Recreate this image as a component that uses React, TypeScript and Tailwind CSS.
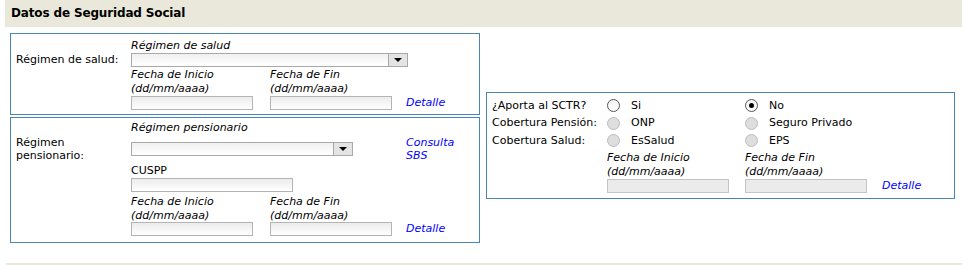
import React from "react";

const field = "h-[14px] border border-[#b4b4b4] bg-linear-to-b from-[#ececec] to-white";

const Select = ({width}: {width: string}) => (
    <div className={`${width} h-[14px] flex border border-[#a9a9a9] bg-linear-to-b from-[#f0f0f0] to-white`}>
        <div className="flex-1"/>
        <div className="w-[19px] h-full border-l border-[#a9a9a9] bg-[#e4e4e4] flex items-center justify-center">
            <div className="w-0 h-0 border-l-[4px] border-r-[4px] border-t-[4px] border-l-transparent border-r-transparent border-t-black"/>
        </div>
    </div>
);

const Radio = ({checked, disabled}: {checked?: boolean; disabled?: boolean}) => (
    <span
        className={
            "w-[13px] h-[13px] rounded-full border flex items-center justify-center " +
            (disabled ? "border-[#bcbcbc] bg-[#dedede]" : "border-[#555] bg-linear-to-b from-[#f4f4f4] to-white")
        }
    >
        {checked && <span className="w-[5px] h-[5px] rounded-full bg-black"/>}
    </span>
);

const Option = ({label, checked, disabled}: {label: string; checked?: boolean; disabled?: boolean}) => (
    <div className="flex items-center gap-[11px]">
        <Radio checked={checked} disabled={disabled}/>
        <span>{label}</span>
    </div>
);

export default function App() {
    return (
        <div className="w-[968px] h-[265px] overflow-hidden bg-white text-[11px] text-black font-['DejaVu_Sans',Verdana,sans-serif]">
            {/* encabezado */}
            <div className="ml-[5px] w-[957px] h-[27px] bg-[#eae8da] pl-[6px] text-[12px] font-bold tracking-[-0.15px] leading-[27px]">
                Datos de Seguridad Social
            </div>

            <div className="mt-[6px] pl-[10px] flex items-start">
                <div className="w-[470px] flex flex-col gap-[2px]">
                    {/* Régimen de salud */}
                    <div className="h-[82px] border border-[#4a85b8] pl-[5px] pt-[4px] grid grid-cols-[115px_139px_136px_1fr] grid-rows-[15px_13px_16px_14px_14px]">
                        <span className="col-start-2 col-span-3 italic leading-[15px]">Régimen de salud</span>
                        <span className="col-start-1 leading-[13px]">Régimen de salud:</span>
                        <div className="col-span-3">
                            <Select width="w-[277px]"/>
                        </div>
                        <span className="col-start-2 self-end italic leading-[15px]">Fecha de Inicio</span>
                        <span className="self-end italic leading-[15px]">Fecha de Fin</span>
                        <span/>
                        <span className="col-start-2 italic leading-[14px]">(dd/mm/aaaa)</span>
                        <span className="italic leading-[14px]">(dd/mm/aaaa)</span>
                        <span/>
                        <input readOnly className={`col-start-2 w-[122px] ${field}`}/>
                        <input readOnly className={`w-[122px] ${field}`}/>
                        <a className="italic text-[#0000ff] leading-[14px]">Detalle</a>
                    </div>

                    {/* Régimen pensionario */}
                    <div className="h-[126px] border border-[#4a85b8] pl-[5px] pt-[3px] grid grid-cols-[115px_139px_136px_1fr] grid-rows-[14px_27px_16px_14px_17px_13px_14px]">
                        <span className="col-start-2 col-span-3 italic leading-[14px]">Régimen pensionario</span>
                        <span className="col-start-1 self-center leading-[13px]">
                            Régimen<br/>pensionario:
                        </span>
                        <div className="col-span-2 self-center">
                            <Select width="w-[222px]"/>
                        </div>
                        <a className="self-center italic text-[#0000ff] leading-[13px]">
                            Consulta<br/>SBS
                        </a>
                        <span className="col-start-2 self-end leading-[15px]">CUSPP</span>
                        <span/>
                        <span/>
                        <input readOnly className={`col-start-2 col-span-2 w-[162px] ${field}`}/>
                        <span/>
                        <span className="col-start-2 self-end italic leading-[15px]">Fecha de Inicio</span>
                        <span className="self-end italic leading-[15px]">Fecha de Fin</span>
                        <span/>
                        <span className="col-start-2 italic leading-[13px]">(dd/mm/aaaa)</span>
                        <span className="italic leading-[13px]">(dd/mm/aaaa)</span>
                        <span/>
                        <input readOnly className={`col-start-2 w-[122px] ${field}`}/>
                        <input readOnly className={`w-[122px] ${field}`}/>
                        <a className="italic text-[#0000ff] leading-[14px]">Detalle</a>
                    </div>
                </div>

                {/* SCTR */}
                <div className="ml-[6px] mt-[59px] w-[469px] h-[107px] border border-[#4a85b8] pl-[5px] pt-[4px] grid grid-cols-[115px_138px_137px_1fr] grid-rows-[17.5px_17.5px_17.5px_15px_14px_14px]">
                    <span className="self-center">¿Aporta al SCTR?</span>
                    <div className="self-center"><Option label="Si"/></div>
                    <div className="self-center"><Option label="No" checked/></div>
                    <span/>
                    <span className="self-center">Cobertura Pensión:</span>
                    <div className="self-center"><Option label="ONP" disabled/></div>
                    <div className="self-center"><Option label="Seguro Privado" disabled/></div>
                    <span/>
                    <span className="self-center">Cobertura Salud:</span>
                    <div className="self-center"><Option label="EsSalud" disabled/></div>
                    <div className="self-center"><Option label="EPS" disabled/></div>
                    <span/>
                    <span className="col-start-2 self-end italic leading-[14px]">Fecha de Inicio</span>
                    <span className="self-end italic leading-[14px]">Fecha de Fin</span>
                    <span/>
                    <span className="col-start-2 italic leading-[14px]">(dd/mm/aaaa)</span>
                    <span className="italic leading-[14px]">(dd/mm/aaaa)</span>
                    <span/>
                    <input readOnly disabled className="col-start-2 w-[122px] h-[14px] border border-[#c4c4c4] bg-[#ebebeb]"/>
                    <input readOnly disabled className="w-[122px] h-[14px] border border-[#c4c4c4] bg-[#ebebeb]"/>
                    <a className="italic text-[#0000ff] leading-[14px]">Detalle</a>
                </div>
            </div>

            <div className="mt-[20px] ml-[6px] w-[956px] h-[4px] bg-[#eae8da]"/>
        </div>
    );
}
